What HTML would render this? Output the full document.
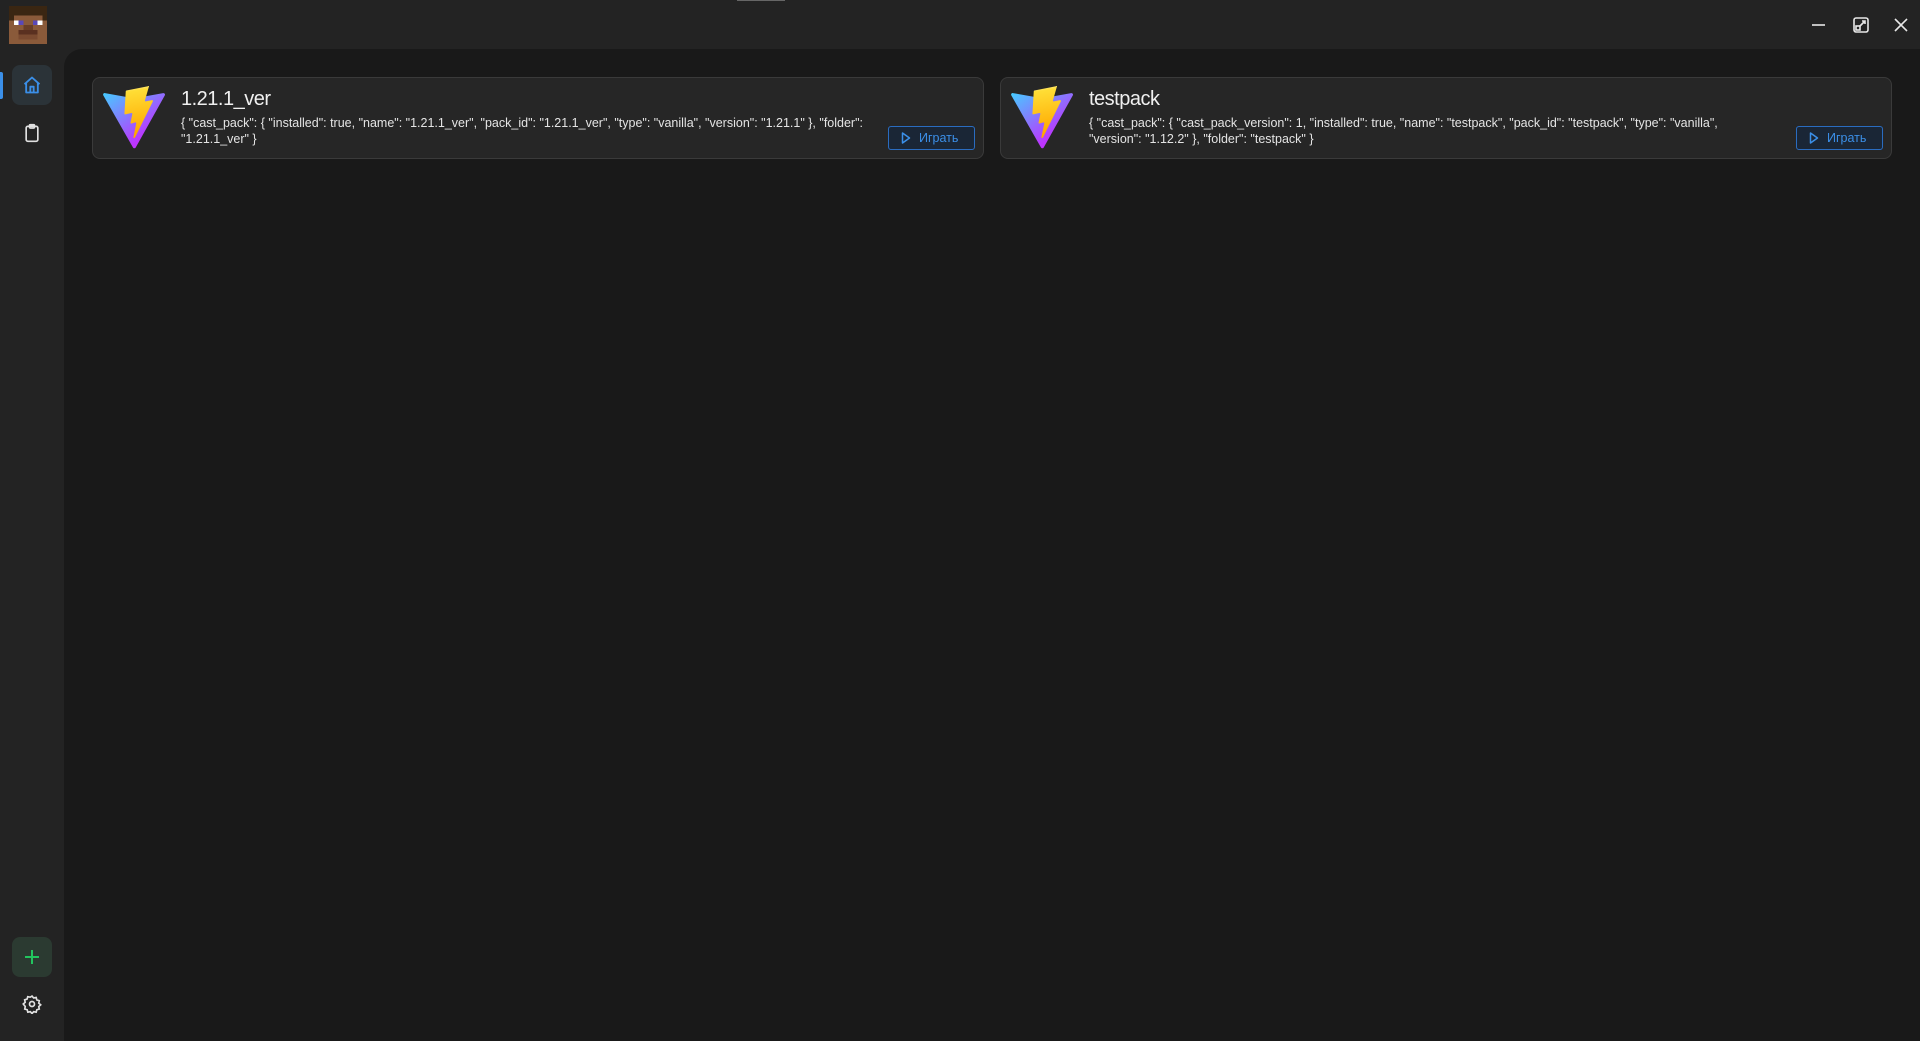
<!DOCTYPE html>
<html><head><meta charset="utf-8"><style>
*{box-sizing:border-box;margin:0;padding:0}
body{width:1920px;height:1041px;background:#232323;font-family:"Liberation Sans",sans-serif;overflow:hidden;position:relative;color:#e8e8e8}
.main{position:absolute;left:64px;top:49px;right:0;bottom:0;background:#191919;border-top-left-radius:18px}
.card{position:absolute;top:77px;width:892px;height:82px;background:#262626;border:1px solid #3a3a3a;border-radius:8px}
.logo{position:absolute;left:8px;top:8px}
.t{position:absolute;left:88px;top:10px;font-size:20px;color:#f0f0f0;letter-spacing:-0.5px}
.d{position:absolute;left:88px;top:37px;white-space:nowrap;font-size:12.5px;line-height:16px;color:#e4e4e4}
.btn{position:absolute;right:8px;top:48px;width:87px;height:24px;border:1px solid #2a6cc0;border-radius:3px;background:#1a2636;color:#3b8fe8;font-size:12.5px;line-height:22px;padding-left:30px}
.btn svg{position:absolute;left:12px;top:5px}
</style></head><body>
<div style="position:absolute;left:737px;top:0;width:48px;height:1px;background:#666"></div>
<svg style="position:absolute;left:9px;top:6px" width="38" height="38" viewBox="0 0 8 8" shape-rendering="crispEdges">
<rect width="8" height="8" fill="#8a5a3a"/>
<rect width="8" height="2" fill="#3a2612"/><rect y="2" width="1" height="1" fill="#3a2612"/><rect x="7" y="2" width="1" height="1" fill="#3a2612"/>
<rect x="1" y="3" width="1" height="1" fill="#fff"/><rect x="2" y="3" width="1" height="1" fill="#5a48b8"/>
<rect x="5" y="3" width="1" height="1" fill="#5a48b8"/><rect x="6" y="3" width="1" height="1" fill="#fff"/>
<rect x="3" y="4" width="2" height="1" fill="#6a3e26"/><rect x="2" y="5" width="4" height="1" fill="#5a3020"/><rect x="2" y="6" width="4" height="1" fill="#7a4a30"/>
</svg>
<div style="position:absolute;left:0;top:72px;width:3px;height:27px;background:#3b8fe8;border-radius:0 2px 2px 0"></div>
<div style="position:absolute;left:12px;top:65px;width:40px;height:40px;border-radius:8px;background:#2b3338"></div>
<svg style="position:absolute;left:22px;top:75px" width="20" height="20" viewBox="0 0 24 24" fill="none" stroke="#3b8fe8" stroke-width="2.2" stroke-linejoin="round"><path d="M3 11L12 3l9 8M5 9.5V21h14V9.5M10 21v-7h4v7"/></svg>
<svg style="position:absolute;left:22px;top:123px" width="20" height="20" viewBox="0 0 24 24" fill="none" stroke="#e0e0e0" stroke-width="2"><rect x="5" y="4" width="14" height="18" rx="2"/><rect x="9" y="2" width="6" height="4" rx="1"/></svg>
<div style="position:absolute;left:12px;top:937px;width:40px;height:40px;border-radius:8px;background:#2b3a31"></div>
<svg style="position:absolute;left:22px;top:947px" width="20" height="20" viewBox="0 0 20 20" stroke="#22c55e" stroke-width="2"><path d="M10 3v14M3 10h14"/></svg>
<svg style="position:absolute;left:22px;top:994px" width="20" height="20" viewBox="0 0 24 24" fill="none" stroke="#e0e0e0" stroke-width="2"><circle cx="12" cy="12" r="3"/><path d="M12 2.5l2 2.3 3-.6.8 2.9 2.9.9-.6 3 2.3 2-2.3 2 .6 3-2.9.9-.8 2.9-3-.6-2 2.3-2-2.3-3 .6-.8-2.9-2.9-.9.6-3L1.5 12l2.3-2-.6-3 2.9-.9.8-2.9 3 .6z"/></svg>
<svg style="position:absolute;left:1810px;top:16px" width="100" height="18" viewBox="0 0 100 18" fill="none" stroke="#e8e8e8" stroke-width="1.6"><path d="M2 9h13"/><rect x="44" y="2" width="14" height="14" rx="2"/><rect x="46" y="10" width="4" height="4"/><path d="M50 10l5-5M52 5h3v3"/><path d="M85 3l12 12M97 3L85 15"/></svg>
<div class="main"></div>
<div class="card" style="left:92px">
<svg class="logo" width="66" height="64" viewBox="0 0 410 404"><defs><linearGradient id="a" x1="6" y1="33" x2="235" y2="344" gradientUnits="userSpaceOnUse"><stop stop-color="#41D1FF"/><stop offset="1" stop-color="#BD34FE"/></linearGradient><linearGradient id="b" x1="194" y1="8.8" x2="236" y2="294" gradientUnits="userSpaceOnUse"><stop stop-color="#FFEA83"/><stop offset=".08" stop-color="#FFDD35"/><stop offset="1" stop-color="#FFA800"/></linearGradient></defs><path d="M399.6 59.5L215.9 388a10 10 0 01-17.4.1L11.2 59.5c-4.2-7.4 2.1-16.3 10.5-14.8l183.9 32.9a10 10 0 003.5 0l180-32.8c8.3-1.5 14.7 7.3 10.5 14.7z" fill="url(#a)"/><path d="M292.9 1.6L157 28.2a5 5 0 00-4 4.6l-8.4 141.3a5 5 0 006.1 5.1l37.8-8.7a5 5 0 016 5.8l-11.2 55a5 5 0 006.3 5.8l23.4-7.1a5 5 0 016.3 5.8l-17.9 86.6c-1.1 5.4 6.1 8.4 9.1 3.7l2-3.1L324.2 96.7c1.9-3.7-1.4-8-5.4-7.2l-39 7.5a5 5 0 01-5.8-6.3l25.5-88.2a5 5 0 00-5.9-6.3z" fill="url(#b)"/></svg>
<div class="t">1.21.1_ver</div>
<div class="d">{ "cast_pack": { "installed": true, "name": "1.21.1_ver", "pack_id": "1.21.1_ver", "type": "vanilla", "version": "1.21.1" }, "folder":<br>"1.21.1_ver" }</div>
<div class="btn"><svg width="10" height="12" viewBox="0 0 10 12" fill="none" stroke="#3b8fe8" stroke-width="1.5" stroke-linejoin="round"><path d="M1.5 1v10l7-5z"/></svg>Играть</div>
</div>
<div class="card" style="left:1000px">
<svg class="logo" width="66" height="64" viewBox="0 0 410 404"><path d="M399.6 59.5L215.9 388a10 10 0 01-17.4.1L11.2 59.5c-4.2-7.4 2.1-16.3 10.5-14.8l183.9 32.9a10 10 0 003.5 0l180-32.8c8.3-1.5 14.7 7.3 10.5 14.7z" fill="url(#a)"/><path d="M292.9 1.6L157 28.2a5 5 0 00-4 4.6l-8.4 141.3a5 5 0 006.1 5.1l37.8-8.7a5 5 0 016 5.8l-11.2 55a5 5 0 006.3 5.8l23.4-7.1a5 5 0 016.3 5.8l-17.9 86.6c-1.1 5.4 6.1 8.4 9.1 3.7l2-3.1L324.2 96.7c1.9-3.7-1.4-8-5.4-7.2l-39 7.5a5 5 0 01-5.8-6.3l25.5-88.2a5 5 0 00-5.9-6.3z" fill="url(#b)"/></svg>
<div class="t">testpack</div>
<div class="d">{ "cast_pack": { "cast_pack_version": 1, "installed": true, "name": "testpack", "pack_id": "testpack", "type": "vanilla",<br>"version": "1.12.2" }, "folder": "testpack" }</div>
<div class="btn"><svg width="10" height="12" viewBox="0 0 10 12" fill="none" stroke="#3b8fe8" stroke-width="1.5" stroke-linejoin="round"><path d="M1.5 1v10l7-5z"/></svg>Играть</div>
</div>
</body></html>
